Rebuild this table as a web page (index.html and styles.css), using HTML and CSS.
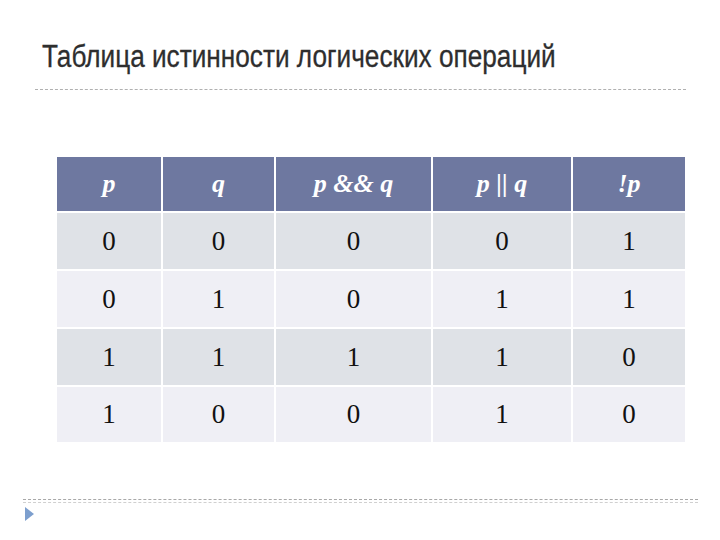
FILE: index.html
```html
<!DOCTYPE html>
<html>
<head>
<meta charset="utf-8">
<link rel="stylesheet" href="styles.css">
</head>
<body>
<div class="slide">
  <div class="title-wrap"><h1 class="title">Таблица истинности логических операций</h1></div>
  <div class="rule-top"></div>
  <table class="truth">
    <thead>
      <tr><th class="c1">p</th><th class="c2">q</th><th class="c3">p &amp;&amp; q</th><th class="c4">p || q</th><th class="c5">!p</th></tr>
    </thead>
    <tbody>
      <tr class="dark"><td>0</td><td>0</td><td>0</td><td>0</td><td>1</td></tr>
      <tr class="light"><td>0</td><td>1</td><td>0</td><td>1</td><td>1</td></tr>
      <tr class="dark"><td>1</td><td>1</td><td>1</td><td>1</td><td>0</td></tr>
      <tr class="light"><td>1</td><td>0</td><td>0</td><td>1</td><td>0</td></tr>
    </tbody>
  </table>
  <div class="rule-bottom"></div>
  <div class="arrow"></div>
</div>
</body>
</html>
```
FILE: styles.css
```css
html, body { margin: 0; padding: 0; background: #fff; }
.slide { width: 720px; height: 540px; position: relative; overflow: hidden; }
.title-wrap { padding: 39px 0 0 42px; height: 37px; }
.title {
  margin: 0;
  font-family: "Liberation Sans", Arial, sans-serif;
  font-weight: normal;
  font-size: 31px;
  line-height: 36px;
  color: #2e2e2e;
  display: inline-block;
  white-space: nowrap;
  transform: scaleX(0.845);
  transform-origin: left top;
  -webkit-text-stroke: 0.3px #2e2e2e;
}
.rule-top {
  margin: 13px 34px 0 35px;
  border-top: 1px dashed #b0b0b0;
}
.truth {
  margin: 67px 0 0 57px;
  border-collapse: collapse;
  table-layout: fixed;
}
.truth th, .truth td { border: 2px solid #fff; text-align: center; padding: 0; }
.truth th:first-child, .truth td:first-child { border-left: 0; }
.truth th:last-child, .truth td:last-child { border-right: 0; }
.truth th {
  background: #6e78a0;
  color: #fff;
  height: 54px;
  font-family: "Liberation Serif", "Times New Roman", serif;
  font-style: italic;
  font-weight: bold;
  font-size: 26px;
  border-top: 0;
}
.c1 { width: 104px; }
.c2 { width: 111px; }
.c3 { width: 155px; }
.c4 { width: 138px; }
.c5 { width: 112px; }
.truth td {
  height: 56px;
  font-family: "Liberation Serif", "Times New Roman", serif;
  font-size: 27px;
  color: #111;
}
.dark td { background: #dfe2e7; }
.light td { background: #efeff5; }
.truth tbody tr:last-child td { border-bottom: 0; height: 55px; }
.rule-bottom {
  margin: 57px 22px 0 23px;
  height: 2px;
  border-top: 1px dashed #a8a8a8;
  border-bottom: 1px dashed #d0d0d0;
}
.arrow {
  margin: 4px 0 0 25px;
  width: 0; height: 0;
  border-top: 7px solid transparent;
  border-bottom: 7px solid transparent;
  border-left: 9px solid #7d9fce;
}
```
